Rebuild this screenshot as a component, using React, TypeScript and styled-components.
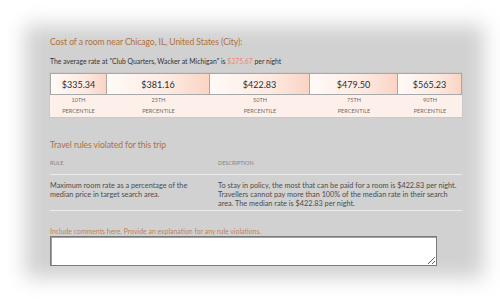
import React from "react";
import styled, { createGlobalStyle } from "styled-components";

const Global = createGlobalStyle`
  html, body { margin: 0; padding: 0; background: #ffffff; }
  body { font-family: Lato, "Open Sans", sans-serif; overflow: hidden; }
`;

const Page = styled.div`
  width: 500px;
  height: 305px;
  overflow: hidden;
  padding-top: 32px;
  box-sizing: border-box;
`;

const Panel = styled.div`
  position: relative;
  isolation: isolate;
  margin-left: 40px;
  width: 430px;
  height: 233px;
  box-sizing: border-box;
  padding: 4px 8px 0 10px;

  &::before {
    content: "";
    position: absolute;
    top: -7px;
    left: -15px;
    right: -14px;
    bottom: -13px;
    background: #d1d1d1;
    filter: blur(10px);
    z-index: -1;
  }
`;

const Heading = styled.h2<{ $top?: number }>`
  margin: ${(p) => p.$top ?? 0}px 0 0;
  font-size: 8.6px;
  letter-spacing: -0.08px;
  line-height: 12px;
  font-weight: 400;
  color: #b0703a;
`;

const Sub = styled.p`
  margin: 8px 0 0;
  font-size: 6.85px;
  line-height: 10px;
  color: #333;
`;

const Rate = styled.span`
  color: #f08866;
`;

const Percentiles = styled.div`
  margin-top: 7px;
  display: grid;
  grid-template-columns: 57px 103px 100px 88px 64px;
  width: 412px;
  background: #fdf0ea;
  box-shadow: 0 0 0 1px #c9c9c9;
`;

const Price = styled.div`
  height: 22px;
  box-sizing: border-box;
  border: 1px solid #a8a8a8;
  margin-left: -1px;
  &:first-child { margin-left: 0; }
  display: flex;
  align-items: center;
  justify-content: center;
  font-size: 9px;
  color: #2e2e2e;
  background: linear-gradient(to right, #fffaf7 0%, #fdeae2 60%, #fad4c4 100%);
`;

const Label = styled.div`
  height: 22px;
  display: flex;
  flex-direction: column;
  align-items: center;
  justify-content: center;
  font-size: 5.5px;
  line-height: 11px;
  letter-spacing: 0.1px;
  color: #6a6a6a;
  text-transform: uppercase;
`;

const Rules = styled.div`
  margin-top: 7px;
  width: 412px;
  display: grid;
  grid-template-columns: 168px 244px;
`;

const HeadCell = styled.div`
  font-size: 5.5px;
  line-height: 10px;
  color: #858585;
  text-transform: uppercase;
  padding-bottom: 6px;
  border-bottom: 1px solid #ececec;
`;

const Cell = styled.div`
  font-size: 7.3px;
  line-height: 9px;
  color: #4d4d4d;
  padding: 6px 0 2px;
  border-bottom: 1px solid #ececec;
`;

const CommentLabel = styled.label`
  display: block;
  margin-top: 16px;
  font-size: 6.9px;
  line-height: 9px;
  color: #bf8157;
`;

const Comment = styled.textarea`
  display: block;
  margin: 0;
  width: 387px;
  height: 30px;
  box-sizing: border-box;
  border: 1px solid #7a7a7a;
  box-shadow: inset 1px 1px 0 #a0a0a0;
  background: #ffffff;
  resize: both;
  font-family: Lato, sans-serif;
  outline: none;
`;

const data = [
  { price: "$335.34", p: "10th" },
  { price: "$381.16", p: "25th" },
  { price: "$422.83", p: "50th" },
  { price: "$479.50", p: "75th" },
  { price: "$565.23", p: "90th" },
];

export default function App() {
  return (
    <Page>
      <Global />
      <Panel>
        <Heading>Cost of a room near Chicago, IL, United States (City):</Heading>
        <Sub>
          The average rate at "Club Quarters, Wacker at Michigan" is <Rate>$375.67</Rate> per night
        </Sub>
        <Percentiles>
          {data.map((d) => (
            <Price key={d.price}>{d.price}</Price>
          ))}
          {data.map((d) => (
            <Label key={d.p}>
              <span>{d.p}</span>
              <span>Percentile</span>
            </Label>
          ))}
        </Percentiles>
        <Heading $top={22}>Travel rules violated for this trip</Heading>
        <Rules>
          <HeadCell>Rule</HeadCell>
          <HeadCell>Description</HeadCell>
          <Cell>
            Maximum room rate as a percentage of the
            <br />
            median price in target search area.
          </Cell>
          <Cell>
            To stay in policy, the most that can be paid for a room is $422.83 per night.
            Travellers cannot pay more than 100% of the median rate in their search area.
            The median rate is $422.83 per night.
          </Cell>
        </Rules>
        <CommentLabel htmlFor="c">
          Include comments here. Provide an explanation for any rule violations.
        </CommentLabel>
        <Comment id="c" />
      </Panel>
    </Page>
  );
}
